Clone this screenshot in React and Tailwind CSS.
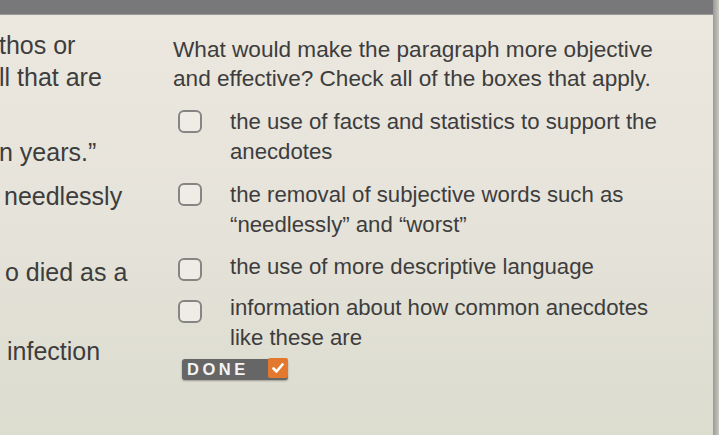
import React from "react";

const font = { fontFamily: '"Liberation Sans", Arial, sans-serif' };

function Box() {
  return <div className="w-[24px] h-[23px] shrink-0 rounded-[6px] border-[2.5px] border-[#858583] bg-[#efece5]" />;
}

function Option({ lines, boxTop = "mt-[3px]" }) {
  return (
    <div className="flex items-start">
      <div className={`w-[57px] pl-[5px] ${boxTop}`}>
        <Box />
      </div>
      <div className="leading-[30px] text-[22.2px]">
        {lines.map((l, i) => (
          <div key={i}>{l}</div>
        ))}
      </div>
    </div>
  );
}

export default function App() {
  return (
    <div
      className="relative w-[719px] h-[435px] overflow-hidden bg-gradient-to-b from-[#ece8e0] via-[#e6e3da] to-[#dcdccf] text-[#3d3d3d]"
      style={font}
    >
      <div className="h-[15px] bg-[#78787b] border-b border-[#9a9a9a]" />
      <div className="absolute right-0 top-0 w-[6px] h-full bg-gradient-to-r from-[#9a9a97] to-[#c9c8c1]" />
      <div className="flex">
        <div className="w-[173px] shrink-0 overflow-hidden whitespace-nowrap leading-[30px] text-[25px]">
          <div className="mt-[15px] -ml-[1px]">thos or</div>
          <div className="mt-[2px] -ml-[1px]">ll that are</div>
          <div className="mt-[45px] -ml-[1px]">n years.”</div>
          <div className="mt-[14px] ml-[4px]">needlessly</div>
          <div className="mt-[46px] ml-[5px]">o died as a</div>
          <div className="mt-[49px] ml-[7px]">infection</div>
        </div>
        <div className="flex flex-col">
          <div className="mt-[20px] leading-[29px] text-[22.6px]">
            <div>What would make the paragraph more objective</div>
            <div>and effective? Check all of the boxes that apply.</div>
          </div>
          <div className="mt-[14px]">
            <Option lines={["the use of facts and statistics to support the", "anecdotes"]} />
          </div>
          <div className="mt-[13px]">
            <Option lines={["the removal of subjective words such as", "“needlessly” and “worst”"]} />
          </div>
          <div className="mt-[12px]">
            <Option lines={["the use of more descriptive language"]} boxTop="mt-[6px]" />
          </div>
          <div className="mt-[11px]">
            <Option lines={["information about how common anecdotes", "like these are"]} boxTop="mt-[7px]" />
          </div>
          <div className="mt-[6px] ml-[9px] flex items-center w-[106px] h-[21px] rounded-[3px] bg-[#666666] shadow-[0_1px_2px_rgba(0,0,0,0.3)]">
            <span className="pl-[5px] text-[#f4f4f4] font-bold text-[16.5px] tracking-[3.5px] leading-none">DONE</span>
            <span className="ml-auto -mt-[3px] w-[20px] h-[20px] rounded-[2px] bg-[#e2792f] flex items-center justify-center">
              <svg width="12" height="11" viewBox="0 0 12 11">
                <path d="M1.5 5.5 L4.5 8.5 L10.5 1.5" stroke="white" strokeWidth="2.6" fill="none" strokeLinecap="round" strokeLinejoin="round" />
              </svg>
            </span>
          </div>
        </div>
      </div>
    </div>
  );
}
